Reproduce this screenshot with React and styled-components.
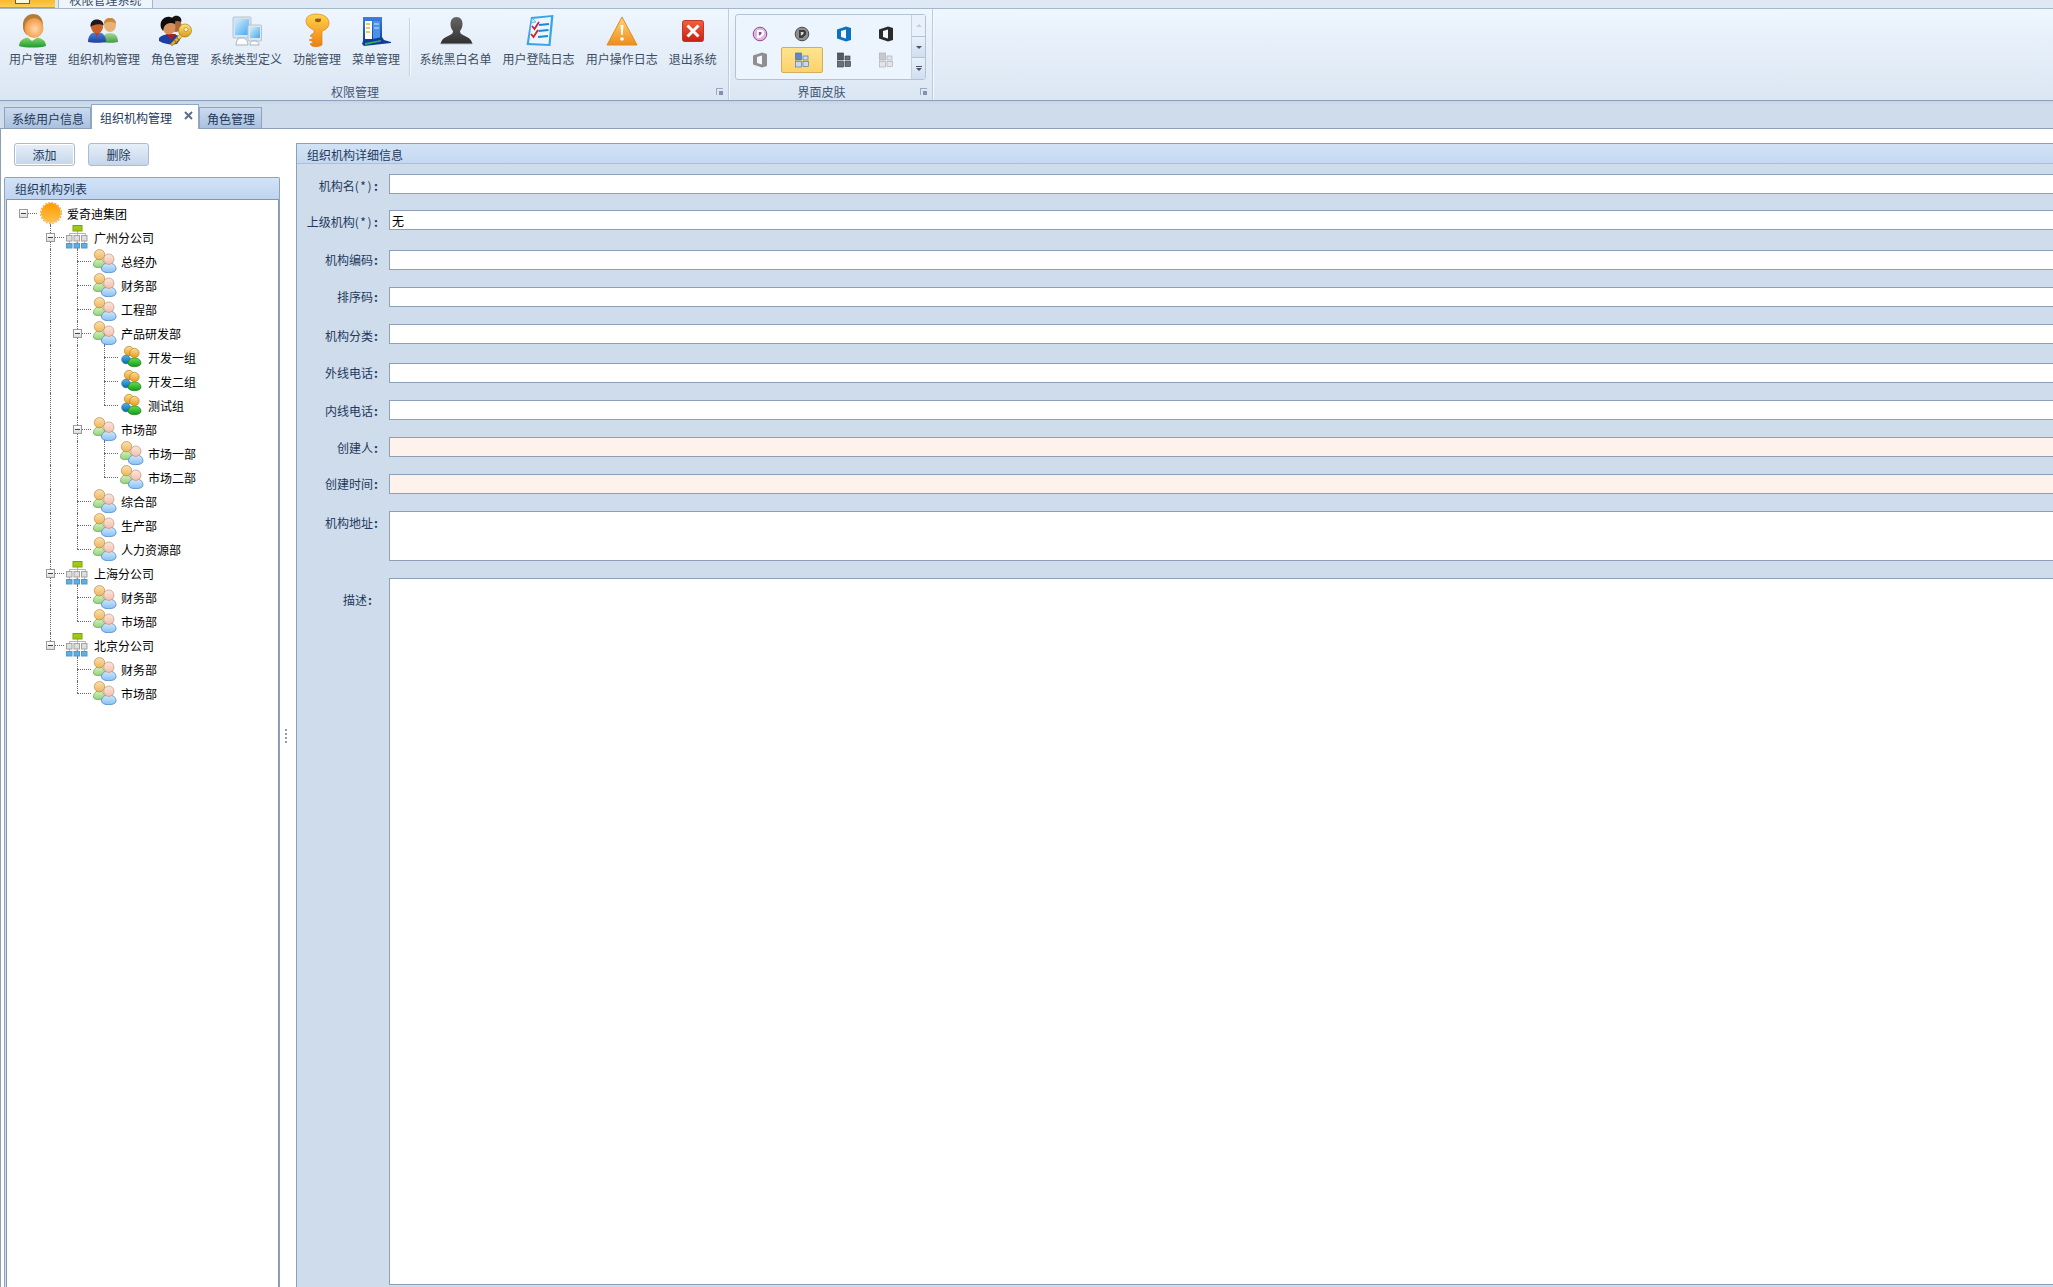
import React from 'react'
import styled, { createGlobalStyle } from 'styled-components'

const Global = createGlobalStyle`
  html, body {
    margin: 0;
    padding: 0;
    height: 100%;
    overflow: hidden;
    background: #ffffff;
  }
  * { box-sizing: border-box; }
  body, input, textarea, button {
    font-family: "Noto Sans CJK SC", "Liberation Sans", sans-serif;
    font-size: 12px;
  }
`

const Page = styled.div`
  width: 2053px;
  height: 1287px;
  display: flex;
  flex-direction: column;
  overflow: hidden;
`

// title strip, cut off by the top of the window
const TitleStrip = styled.div`
  height: 9px;
  flex: none;
  display: flex;
  gap: 3px;
  background: #dfe9f5;
  border-bottom: 1px solid #a7b7c9;
  overflow: hidden;
`
const AppButton = styled.div`
  width: 55px;
  height: 8px;
  background: linear-gradient(#f7b92f, #fbcf55);
  border-bottom: 1px solid #d89b1c;
  display: flex;
  justify-content: center;
`
const AppGlyph = styled.span`
  width: 15px;
  height: 4px;
  margin-right: 10px;
  border: 1px solid #6b5a33;
  border-top: none;
  background: #fff7dc;
`
const TitleTab = styled.div`
  width: 95px;
  height: 9px;
  background: #eef5fd;
  border-left: 1px solid #a7b7c9;
  border-right: 1px solid #a7b7c9;
  text-align: center;
  line-height: 0;
  color: #3a4c63;
`

const Ribbon = styled.div`
  height: 92px;
  flex: none;
  display: flex;
  background: linear-gradient(#eef6fe, #dbe6f3);
  border-bottom: 1px solid #8fa1b8;
`
const Group = styled.div`
  position: relative;
  flex: none;
  width: ${p => p.$width}px;
  display: flex;
  flex-direction: column;
  border-right: 1px solid #bccbdd;
  box-shadow: 1px 0 0 #f3f8fd;
`
const GroupBody = styled.div`
  height: 75px;
  display: flex;
  align-items: flex-start;
  padding-left: ${p => p.$left}px;
`
const GroupLabel = styled.div`
  height: 16px;
  line-height: 16px;
  padding-right: 18px;
  text-align: center;
  color: #3e5675;
`
const Launcher = styled.span`
  position: absolute;
  right: 5px;
  bottom: 5px;
  width: 7px;
  height: 7px;
  border-left: 1px solid #9aa9bb;
  border-top: 1px solid #9aa9bb;
  &::after {
    content: '';
    position: absolute;
    right: 0;
    bottom: 0;
    width: 4px;
    height: 4px;
    background: #7f93ab;
  }
`
const RibbonItem = styled.div`
  flex: none;
  padding: 3px 5.5px 0;
  display: flex;
  flex-direction: column;
  align-items: center;
  color: #3d4d63;
  white-space: nowrap;
  line-height: 16px;
  svg { display: block; margin-bottom: 3px; }
`
const Divider = styled.div`
  width: 1px;
  height: 58px;
  margin: 9px 4px 0 3.5px;
  flex: none;
  background: #c5d2e1;
  box-shadow: 1px 0 0 #f5f9fd;
`

const Gallery = styled.div`
  margin: 5px 0 0 6px;
  width: 191px;
  height: 66px;
  display: flex;
  justify-content: space-between;
  background: #ecf4fd;
  border: 1px solid #b3c3d7;
  border-radius: 3px;
`
const GalleryGrid = styled.div`
  display: grid;
  grid-template-columns: repeat(4, 42px);
  grid-auto-rows: 26px;
  padding: 6px 0 0 3px;
`
const GalleryCell = styled.div`
  display: flex;
  align-items: center;
  justify-content: center;
  border-radius: 2px;
  ${p => p.$selected && `
    background: linear-gradient(#fde48f, #fdd26a);
    border: 1px solid #d2ad62;
  `}
`
const GalleryScroll = styled.div`
  width: 14px;
  display: flex;
  flex-direction: column;
  border-left: 1px solid #c3d1e2;
`
const ScrollButton = styled.div`
  flex: 1;
  display: flex;
  flex-direction: column;
  gap: 1px;
  align-items: center;
  justify-content: center;
  background: ${p => (p.$off ? '#e9f1fa' : 'linear-gradient(#e9f1fa, #d0deef)')};
  & + & { border-top: 1px solid #b3c3d7; }
`
const Arrow = styled.span`
  width: 0;
  height: 0;
  border-left: 3px solid transparent;
  border-right: 3px solid transparent;
  ${p => (p.$up ? `border-bottom: 3px solid #c3cfdd;` : `border-top: 3px solid #44546a;`)}
`
const ArrowBar = styled.span`
  width: 6px;
  height: 1px;
  background: #44546a;
`

const TabStrip = styled.div`
  height: 28px;
  flex: none;
  display: flex;
  align-items: flex-end;
  padding-left: 4px;
  background: linear-gradient(#c6d4e6 0, #cfdcec 4px);
  border-bottom: 1px solid #8ea0b8;
`
const DocTab = styled.div`
  position: relative;
  flex: none;
  display: flex;
  align-items: center;
  gap: 11px;
  color: #1e395b;
  white-space: nowrap;
  border: 1px solid #8ea3bf;
  border-bottom: none;
  ${p => (p.$active
    ? `
    height: 25px;
    margin-bottom: -1px;
    padding: 0 5px 0 8px;
    background: #ffffff;
    border-color: #93a8c4;
  `
    : `
    height: 21px;
    padding: 0 6px 0 7px;
    background: linear-gradient(#cbdaee, #aac1de);
  `)}
`
const CloseMark = styled.span`
  width: 10px;
  display: flex;
  justify-content: center;
  margin-top: -3px;
  svg { display: block; }
`

const Content = styled.div`
  flex: 1;
  min-height: 0;
  display: flex;
  border-left: 1px solid #8ea0b8;
`
const LeftPane = styled.div`
  width: 279px;
  flex: none;
  display: flex;
  flex-direction: column;
  padding: 14px 0 0 3px;
`
const Buttons = styled.div`
  display: flex;
  gap: 13px;
  padding-left: 10px;
  margin-bottom: 11px;
`
const ActionButton = styled.button`
  width: 61px;
  height: 23px;
  padding: 0;
  color: #1e395b;
  border-radius: 3px;
  background: linear-gradient(#e6eff9, #c5d6ea);
  border: 1px solid #a8bcd5;
  ${p => p.$focus && `box-shadow: inset 0 0 0 1px #ffffff;`}
`
const ListPanel = styled.div`
  flex: 1;
  min-height: 0;
  display: flex;
  flex-direction: column;
  background: #cfdcec;
  border: 1px solid #8ea3bf;
  border-bottom: none;
  border-radius: 2px 2px 0 0;
`
const ListHeader = styled.div`
  height: 21px;
  flex: none;
  padding-left: 10px;
  line-height: 21px;
  color: #1e395b;
  background: linear-gradient(#d3e3f6, #bed4ef);
`
const TreeBox = styled.div`
  flex: 1;
  margin: 0 0 0 1px;
  padding: 1px 0 0 3px;
  background: #ffffff;
  border: 1px solid #8596ad;
  border-bottom: none;
`
const Row = styled.div`
  height: 24px;
  display: flex;
  align-items: center;
`
const Cell = styled.span`
  position: relative;
  flex: none;
  width: 27px;
  height: 24px;
  &::before {
    content: '';
    display: ${p => (p.$v === 'through' || p.$v === 'tee' || p.$v === 'elbow' ? 'block' : 'none')};
    position: absolute;
    left: 13px;
    top: 0;
    bottom: ${p => (p.$v === 'elbow' ? '12px' : '0')};
    border-left: 1px dotted #6a6a6a;
  }
  &::after {
    content: '';
    display: ${p => (p.$v === 'through' || p.$v === 'none' ? 'none' : 'block')};
    position: absolute;
    left: 13px;
    right: 0;
    top: 12px;
    border-top: 1px dotted #6a6a6a;
  }
`
const Expander = styled.span`
  position: absolute;
  z-index: 1;
  left: 9px;
  top: 8px;
  width: 9px;
  height: 9px;
  background: linear-gradient(#ffffff, #dcdcdc);
  border: 1px solid #9a9a9a;
  &::after {
    content: '';
    position: absolute;
    left: 1px;
    top: 3px;
    width: 5px;
    height: 1px;
    background: #444444;
  }
`
const IconCell = styled(Cell)`
  display: flex;
  align-items: center;
  justify-content: center;
  svg { position: relative; z-index: 1; }
  &::before {
    display: ${p => (p.$open ? 'block' : 'none')};
    top: 12px;
    bottom: 0;
  }
  &::after { display: none; }
`
const NodeText = styled.span`
  margin-left: 3px;
  color: #000000;
  white-space: nowrap;
`

const Splitter = styled.div`
  width: 16px;
  flex: none;
  display: flex;
  flex-direction: column;
  gap: 2px;
  padding: 600px 0 0 5px;
`
const SplitDot = styled.span`
  width: 2px;
  height: 2px;
  background: #8a9bb0;
`

const DetailPanel = styled.div`
  flex: 1;
  min-width: 0;
  margin: 14px -4px 0 0;
  display: flex;
  flex-direction: column;
  background: #cfdcec;
  border: 1px solid #8ea0b8;
  border-bottom: none;
`
const DetailHeader = styled.div`
  height: 20px;
  flex: none;
  padding-left: 10px;
  line-height: 22px;
  color: #1e395b;
  background: linear-gradient(#d3e3f6, #c4d9f1);
  border-bottom: 1px solid #a9c0dc;
`
const Form = styled.div`
  flex: 1;
  min-height: 0;
  display: flex;
  flex-direction: column;
  padding: 10px 0 2px;
`
const FormRow = styled.div`
  display: flex;
  flex: ${p => (p.$grow ? 1 : 'none')};
  min-height: 0;
  margin-bottom: ${p => p.$after || 0}px;
`
const FieldLabel = styled.label`
  flex: none;
  width: 82px;
  height: 20px;
  margin-right: 10px;
  padding-top: ${p => p.$top || 0}px;
  padding-right: ${p => p.$right || 0}px;
  text-align: right;
  line-height: 20px;
  color: #1e395b;
  white-space: nowrap;
`
const Star = styled.span`
  letter-spacing: 1.5px;
`
const Colon = styled.span`
  display: inline-block;
  width: 6px;
  text-align: center;
  font-weight: bold;
`
const Field = styled.input`
  flex: 1;
  min-width: 0;
  height: 20px;
  padding: 0 2px;
  margin: 0;
  outline: none;
  color: #000000;
  background: ${p => (p.readOnly ? '#fef3ec' : '#ffffff')};
  border: 1px solid #8ea0b8;
`
const Area = styled.textarea`
  flex: 1;
  min-width: 0;
  height: ${p => (p.$tall ? 'auto' : '50px')};
  padding: 2px;
  margin: 0;
  outline: none;
  resize: none;
  background: #ffffff;
  border: 1px solid #8ea0b8;
`

/* ribbon icons, each drawn in a 36x36 slot */
const Grad = ({ id, from, to, angle = 90 }) => (
  <linearGradient id={id} gradientTransform={`rotate(${angle} .5 .5)`}>
    <stop offset="0" stopColor={from} />
    <stop offset="1" stopColor={to} />
  </linearGradient>
)

const UserIcon = () => (
  <svg width="36" height="36" viewBox="0 0 36 36">
    <defs>
      <radialGradient id="uFace" cx=".55" cy=".55" r=".6">
        <stop offset="0" stopColor="#ffd9a8" />
        <stop offset="1" stopColor="#f08f3c" />
      </radialGradient>
      <Grad id="uBody" from="#8bd86a" to="#1f9a32" />
    </defs>
    <path d="M4 34c0-6 6-9 13.500-9S31 28 31 34c-6 2-21 2-27 0z" fill="url(#uBody)" />
    <path d="M12 25l5 4 6-4z" fill="#f4f9ee" />
    <path d="M8 15C7 6 13 2 18 2s10 3 10 11c0 5-2 8-4 10H12c-2-2-4-4-4-8z" fill="#b27d38" />
    <ellipse cx="19" cy="16" rx="9.500" ry="10" fill="url(#uFace)" />
  </svg>
)
const OrgIcon = () => (
  <svg width="36" height="36" viewBox="0 0 36 36">
    <defs>
      <Grad id="oG" from="#a9dc8c" to="#3f9a4c" />
      <Grad id="oB" from="#4f86e0" to="#1c3f9c" />
    </defs>
    <path d="M16 30c0-6 3-9 8-9s8 3 8 9c-3 1-13 1-16 0z" fill="url(#oG)" />
    <ellipse cx="24" cy="13" rx="6" ry="7" fill="#e5b274" />
    <path d="M18 12c0-5 3-6 6-6s6 1 6 6c-2-3-9-3-12 0z" fill="#c98a3c" />
    <path d="M2 30c0-6 3-10 9-10s9 4 9 10c-4 1-14 1-18 0z" fill="url(#oB)" />
    <path d="M9 21l2 5 2-5z" fill="#c23b2a" />
    <ellipse cx="11" cy="15" rx="6" ry="6.500" fill="#c9622c" />
    <path d="M4.500 15C4 9 8 7.500 11 7.500s7 2 6.500 6c-3-2-9-2-13 1.500z" fill="#1e1a1c" />
  </svg>
)
const RoleIcon = () => (
  <svg width="36" height="36" viewBox="0 0 36 36">
    <defs>
      <Grad id="rK" from="#ffe680" to="#d99a12" />
    </defs>
    <path d="M2 26c3-3 7-4 11-4s9 1 11 4l-4 6c-6 1-13 0-18-3z" fill="#1b3fa6" />
    <path d="M9 22l5 6 5-6z" fill="#a51f1f" />
    <ellipse cx="19" cy="13" rx="5.500" ry="7" fill="#a76a3f" />
    <path d="M14 11c-1-6 4-8 7-7s4 4 3 6c-3-2-7-1-10 1z" fill="#19130f" />
    <ellipse cx="12" cy="15" rx="6.500" ry="7.500" fill="#d8915c" />
    <path d="M4 16C2 8 8 4 13 5c4 1 6 4 5 7-4-2-9-1-11 3l-1 4z" fill="#0f0d0c" />
    <path d="M15 34l-1.500-2L24 21l2.500 2.500z" fill="url(#rK)" stroke="#a9780f" strokeWidth=".6" />
    <circle cx="28" cy="18.500" r="6.500" fill="url(#rK)" stroke="#a9780f" strokeWidth=".7" />
    <circle cx="29" cy="17.500" r="2" fill="#fff5c4" stroke="#a9780f" strokeWidth=".6" />
    <path d="M17 28l3 3M19.500 25.500l3 3" stroke="#a9780f" strokeWidth="1.400" />
  </svg>
)
const SystemIcon = () => (
  <svg width="36" height="36" viewBox="0 0 36 36">
    <defs>
      <Grad id="sS" from="#c4e4fb" to="#58b4f0" angle={45} />
    </defs>
    <rect x="5" y="5" width="18" height="21" rx="1" fill="#d8e4ee" stroke="#b6c4d2" />
    <rect x="7" y="7" width="14" height="16" fill="url(#sS)" />
    <rect x="20" y="13" width="13.500" height="16" rx="1" fill="#dce7f0" stroke="#b6c4d2" />
    <rect x="22" y="15" width="10" height="11" fill="url(#sS)" />
    <path d="M8 33c0-4 2-6 3-7h5c2 1 4 3 4 7z" fill="#fbfdff" stroke="#a9b4bf" />
    <path d="M22 33c0-2 1-3 2-4h4c2 1 3 2 3 4z" fill="#fbfdff" stroke="#a9b4bf" />
  </svg>
)
const KeyIcon = () => (
  <svg width="36" height="36" viewBox="0 0 36 36">
    <defs>
      <Grad id="kK" from="#ffd44a" to="#ef7f10" />
    </defs>
    <path
      d="M17 2c7 0 13 3 13 9 0 4-3 7-7 8v14c-3 2-8 2-10 1l-2-2 4-2-5-2 5-2-4-2 2-2 2-1v-3c-5-2-8-5-8-9 0-5 5-7 10-7z"
      fill="url(#kK)"
      stroke="#d9730c"
      strokeWidth=".6"
    />
    <ellipse cx="19" cy="8" rx="3" ry="2.200" fill="#9a5a0c" />
    <path d="M16 7c1-2 4-2 5 0-2-1-3-1-5 0z" fill="#fff0b0" />
  </svg>
)
const MenuIcon = () => (
  <svg width="36" height="36" viewBox="0 0 36 36">
    <defs>
      <Grad id="mB" from="#3f7fe0" to="#0c3aa0" />
    </defs>
    <rect x="5" y="5" width="19" height="25" fill="url(#mB)" />
    <rect x="7" y="9" width="7" height="18" fill="#ffffff" />
    <rect x="15" y="9" width="7" height="18" fill="#4c92ea" />
    <path d="M8 12h4M8 16h4M8 20h4" stroke="#e3b92c" strokeWidth="1.500" />
    <path d="M16 12h5M16 16h5" stroke="#cfe6ff" />
    <path d="M5 29l19-4 2 3 7 2v1L6 34 4 32z" fill="#123c9c" />
    <path d="M7 31l16-3v1.500L7 33z" fill="#36b14a" />
  </svg>
)
const BlacklistIcon = () => (
  <svg width="36" height="36" viewBox="0 0 36 36">
    <defs>
      <Grad id="bD" from="#666666" to="#303030" />
    </defs>
    <path
      d="M18.500 5c4 0 6 3 6 7 0 3-1 5-2.500 7 0 2 1 3 3 4 4 2 8 3 9.500 9H2.500C4 26 8 25 12 23c2-1 3-2 3-4-1.500-2-2.500-4-2.500-7 0-4 2-7 6-7z"
      fill="url(#bD)"
    />
    <path d="M3 32h31" stroke="#b6bfca" />
  </svg>
)
const LogIcon = () => (
  <svg width="36" height="36" viewBox="0 0 36 36">
    <path d="M10 5L32.500 3l-3 31-24-1z" fill="#3ba3e6" />
    <path d="M11 7l19-2-2.500 27L8 31z" fill="#e8f6ff" />
    <path d="M11 6l4 4-5 1z" fill="#bfe2f8" stroke="#3ba3e6" strokeWidth=".6" />
    <path d="M18 13l10-1M17.500 19l10-1M17 25l10-1" stroke="#1f86d6" strokeWidth="2.200" />
    <path d="M11 14l2.500 3L18 10M10 22l2.500 3L17 18" fill="none" stroke="#d0202a" strokeWidth="1.800" />
  </svg>
)
const WarnIcon = () => (
  <svg width="36" height="36" viewBox="0 0 36 36">
    <defs>
      <Grad id="wO" from="#ffd878" to="#f08c1c" />
    </defs>
    <path d="M18 5l15 28H3z" fill="url(#wO)" stroke="#e48a1e" strokeLinejoin="round" />
    <path d="M16.500 13h3l-.8 10h-1.400z" fill="#ffffff" />
    <circle cx="18" cy="27" r="1.800" fill="#ffffff" />
  </svg>
)
const ExitIcon = () => (
  <svg width="36" height="36" viewBox="0 0 36 36">
    <defs>
      <Grad id="eR" from="#f2603c" to="#c91f14" />
    </defs>
    <rect x="7.500" y="8.500" width="21" height="21" rx="2" fill="url(#eR)" stroke="#bb3a2a" />
    <path d="M12.500 13.500l11 11M23.500 13.500l-11 11" stroke="#ffffff" strokeWidth="3" />
  </svg>
)

const CloseIcon = () => (
  <svg width="9" height="9" viewBox="0 0 9 9">
    <path d="M1 1l7 7M8 1L1 8" stroke="#5f6f85" strokeWidth="2" />
  </svg>
)

/* skin gallery icons */
const BadgeIcon = ({ ring, fill, mark, hole }) => (
  <svg width="16" height="16" viewBox="0 0 16 16">
    <circle cx="8" cy="8" r="6.800" fill={fill} stroke={ring} />
    <path d="M5 4h5.500l1.500 1.500v3L8.500 12H5z" fill={mark} />
    <path d="M6.800 6h2.700v1.800L8 9.300H6.800z" fill={hole} />
  </svg>
)
const OfficeIcon = ({ color }) => (
  <svg width="16" height="16" viewBox="0 0 16 16">
    <path d="M1 3.500L10 .5l5 1.500v12l-5 1.500-9-3z" fill={color} />
    <path d="M5 11V5l5-1.500v9z" fill="#f4f8fc" />
  </svg>
)
const TilesIcon = ({ a, b, edge }) => (
  <svg width="16" height="16" viewBox="0 0 16 16">
    <rect x="1.500" y="1" width="6" height="7" fill={a} stroke={edge} strokeWidth=".6" />
    <rect x="9" y="4" width="5" height="4" fill={b} stroke={edge} strokeWidth=".6" />
    <rect x="1.500" y="9.500" width="6" height="5.500" fill={b} stroke={edge} strokeWidth=".6" />
    <rect x="9" y="9.500" width="5.500" height="5" fill={b} stroke={edge} strokeWidth=".6" />
  </svg>
)

/* tree icons */
const SunIcon = () => (
  <svg width="24" height="24" viewBox="0 0 24 24">
    <defs>
      <Grad id="tSun" from="#ff9a00" to="#ffc24f" />
    </defs>
    <circle cx="12" cy="12" r="10.500" fill="none" stroke="#dcb26a" strokeWidth="1.200" strokeDasharray="2 1.300" />
    <circle cx="12" cy="12" r="10" fill="url(#tSun)" />
  </svg>
)
const BranchIcon = () => (
  <svg width="24" height="24" viewBox="0 0 24 24">
    <path d="M11.500 6v3M3.500 10V8.500h16V10M11.500 8.500V10M3.500 16v2M11 16v2M18.500 16v2" stroke="#b4b4b4" fill="none" />
    <rect x="7" y=".5" width="9" height="5.500" fill="#9ecb12" stroke="#7fa50e" />
    <rect x=".5" y="10.500" width="5.500" height="5.500" fill="#dedede" stroke="#a4a4a4" />
    <rect x="8" y="10.500" width="5.500" height="5.500" fill="#dedede" stroke="#a4a4a4" />
    <rect x="15.500" y="10.500" width="5.500" height="5.500" fill="#dedede" stroke="#a4a4a4" />
    <rect x=".5" y="18.500" width="5.500" height="4.500" fill="#58b0e8" stroke="#5f95bd" />
    <rect x="8" y="18.500" width="5.500" height="4.500" fill="#58b0e8" stroke="#5f95bd" />
    <rect x="15.500" y="18.500" width="5.500" height="4.500" fill="#58b0e8" stroke="#5f95bd" />
  </svg>
)
const TeamIcon = () => (
  <svg width="24" height="24" viewBox="0 0 24 24">
    <defs>
      <Grad id="tG" from="#d6f0c6" to="#92d276" />
      <Grad id="tB" from="#d6eafd" to="#86bff2" />
      <Grad id="tH" from="#fbe1b0" to="#eeb55c" />
      <Grad id="tP" from="#fae6de" to="#f1c0ac" />
    </defs>
    <path d="M.5 16c0-4 2.500-6 5.500-6s5.500 2 5.500 6c0 3-11 4-11 0z" fill="url(#tG)" stroke="#6f9f58" strokeWidth=".7" />
    <circle cx="6.500" cy="5.700" r="5.200" fill="url(#tH)" stroke="#b98a3e" strokeWidth=".7" />
    <path d="M8.500 20c0-4 3-6 7.200-6s7.300 2 7.300 6c0 5-14.500 5-14.500 0z" fill="url(#tB)" stroke="#4d86c8" strokeWidth=".8" />
    <circle cx="15.800" cy="10.200" r="5.200" fill="url(#tP)" stroke="#bf8f78" strokeWidth=".7" />
  </svg>
)
const SquadIcon = () => (
  <svg width="24" height="24" viewBox="0 0 24 24">
    <defs>
      <Grad id="qG" from="#6ade50" to="#0f9a1c" />
      <Grad id="qB" from="#52b2e4" to="#0f6ba8" />
      <Grad id="qH" from="#ffdd8f" to="#e89a22" />
    </defs>
    <circle cx="6" cy="14.500" r="4.300" fill="url(#qB)" stroke="#0f5f92" strokeWidth=".6" />
    <circle cx="9" cy="6" r="4.700" fill="url(#qH)" stroke="#a8761e" strokeWidth=".6" />
    <path d="M8 18c0-3 3-5 6.500-5s6.500 2 6.500 5c0 5-13 5-13 0z" fill="url(#qG)" stroke="#0f7a18" strokeWidth=".6" />
    <circle cx="14.500" cy="8" r="4.700" fill="url(#qH)" stroke="#a8761e" strokeWidth=".6" />
  </svg>
)

const treeIcons = { sun: SunIcon, branch: BranchIcon, team: TeamIcon, squad: SquadIcon }

const team = (name, children) => ({ name, icon: 'team', children })
const squad = name => ({ name, icon: 'squad' })

const tree = {
  name: '爱奇迪集团',
  icon: 'sun',
  children: [
    {
      name: '广州分公司',
      icon: 'branch',
      children: [
        team('总经办'),
        team('财务部'),
        team('工程部'),
        team('产品研发部', [squad('开发一组'), squad('开发二组'), squad('测试组')]),
        team('市场部', [team('市场一部'), team('市场二部')]),
        team('综合部'),
        team('生产部'),
        team('人力资源部'),
      ],
    },
    { name: '上海分公司', icon: 'branch', children: [team('财务部'), team('市场部')] },
    { name: '北京分公司', icon: 'branch', children: [team('财务部'), team('市场部')] },
  ],
}

const TreeNode = ({ node, guides = [], kind = 'root' }) => {
  const Icon = treeIcons[node.icon]
  const kids = node.children || []
  return (
    <>
      <Row>
        {guides.map((on, i) => (
          <Cell key={i} $v={on ? 'through' : 'none'} />
        ))}
        <Cell $v={kind}>{kids.length > 0 && <Expander />}</Cell>
        <IconCell $open={kids.length > 0}>
          <Icon />
        </IconCell>
        <NodeText>{node.name}</NodeText>
      </Row>
      {kids.map((kid, i) => (
        <TreeNode
          key={kid.name + i}
          node={kid}
          guides={[...guides, kind === 'tee']}
          kind={i === kids.length - 1 ? 'elbow' : 'tee'}
        />
      ))}
    </>
  )
}

const fields = [
  { label: '机构名', star: true, after: 16, top: 2 },
  { label: '上级机构', star: true, after: 20, top: 2, value: '无' },
  { label: '机构编码', after: 17 },
  { label: '排序码', after: 17 },
  { label: '机构分类', after: 19, top: 2 },
  { label: '外线电话', after: 17 },
  { label: '内线电话', after: 17, top: 1 },
  { label: '创建人', after: 17, top: 1, readOnly: true },
  { label: '创建时间', after: 17, readOnly: true },
]

const App = () => (
  <Page>
    <Global />
    <TitleStrip>
      <AppButton>
        <AppGlyph />
      </AppButton>
      <TitleTab>权限管理系统</TitleTab>
    </TitleStrip>

    <Ribbon>
      <Group $width={729}>
        <GroupBody $left={3.5}>
          <RibbonItem><UserIcon />用户管理</RibbonItem>
          <RibbonItem><OrgIcon />组织机构管理</RibbonItem>
          <RibbonItem><RoleIcon />角色管理</RibbonItem>
          <RibbonItem><SystemIcon />系统类型定义</RibbonItem>
          <RibbonItem><KeyIcon />功能管理</RibbonItem>
          <RibbonItem><MenuIcon />菜单管理</RibbonItem>
          <Divider />
          <RibbonItem><BlacklistIcon />系统黑白名单</RibbonItem>
          <RibbonItem><LogIcon />用户登陆日志</RibbonItem>
          <RibbonItem><WarnIcon />用户操作日志</RibbonItem>
          <RibbonItem><ExitIcon />退出系统</RibbonItem>
        </GroupBody>
        <GroupLabel>权限管理</GroupLabel>
        <Launcher />
      </Group>
      <Group $width={204}>
        <GroupBody $left={0}>
          <Gallery>
            <GalleryGrid>
              <GalleryCell><BadgeIcon ring="#8a4f8c" fill="#e2b4e2" mark="#ffffff" hole="#8a4f8c" /></GalleryCell>
              <GalleryCell><BadgeIcon ring="#4a4a4a" fill="#8f8f8f" mark="#3c3c3c" hole="#d8d8d8" /></GalleryCell>
              <GalleryCell><OfficeIcon color="#0a72c4" /></GalleryCell>
              <GalleryCell><OfficeIcon color="#2a2a2a" /></GalleryCell>
              <GalleryCell><OfficeIcon color="#8f8f8f" /></GalleryCell>
              <GalleryCell $selected><TilesIcon a="#5f88c8" b="#c4daf2" edge="#3f6aa8" /></GalleryCell>
              <GalleryCell><TilesIcon a="#555a62" b="#6b7078" edge="#2f3338" /></GalleryCell>
              <GalleryCell><TilesIcon a="#c6c9cd" b="#e2e4e7" edge="#a6a9ad" /></GalleryCell>
            </GalleryGrid>
            <GalleryScroll>
              <ScrollButton $off><Arrow $up /></ScrollButton>
              <ScrollButton><Arrow /></ScrollButton>
              <ScrollButton><ArrowBar /><Arrow /></ScrollButton>
            </GalleryScroll>
          </Gallery>
        </GroupBody>
        <GroupLabel>界面皮肤</GroupLabel>
        <Launcher />
      </Group>
    </Ribbon>

    <TabStrip>
      <DocTab>系统用户信息</DocTab>
      <DocTab $active>组织机构管理<CloseMark><CloseIcon /></CloseMark></DocTab>
      <DocTab>角色管理</DocTab>
    </TabStrip>

    <Content>
      <LeftPane>
        <Buttons>
          <ActionButton $focus>添加</ActionButton>
          <ActionButton>删除</ActionButton>
        </Buttons>
        <ListPanel>
          <ListHeader>组织机构列表</ListHeader>
          <TreeBox>
            <TreeNode node={tree} />
          </TreeBox>
        </ListPanel>
      </LeftPane>

      <Splitter>
        <SplitDot />
        <SplitDot />
        <SplitDot />
        <SplitDot />
      </Splitter>

      <DetailPanel>
        <DetailHeader>组织机构详细信息</DetailHeader>
        <Form>
          {fields.map(f => (
            <FormRow key={f.label} $after={f.after}>
              <FieldLabel $top={f.top}>
                {f.label}
                {f.star && <Star>(*)</Star>}
                <Colon>:</Colon>
              </FieldLabel>
              <Field defaultValue={f.value} readOnly={f.readOnly} />
            </FormRow>
          ))}
          <FormRow $after={17}>
            <FieldLabel $top={2}>机构地址<Colon>:</Colon></FieldLabel>
            <Area />
          </FormRow>
          <FormRow $grow>
            <FieldLabel $top={12} $right={6}>描述<Colon>:</Colon></FieldLabel>
            <Area $tall />
          </FormRow>
        </Form>
      </DetailPanel>
    </Content>
  </Page>
)

export default App
